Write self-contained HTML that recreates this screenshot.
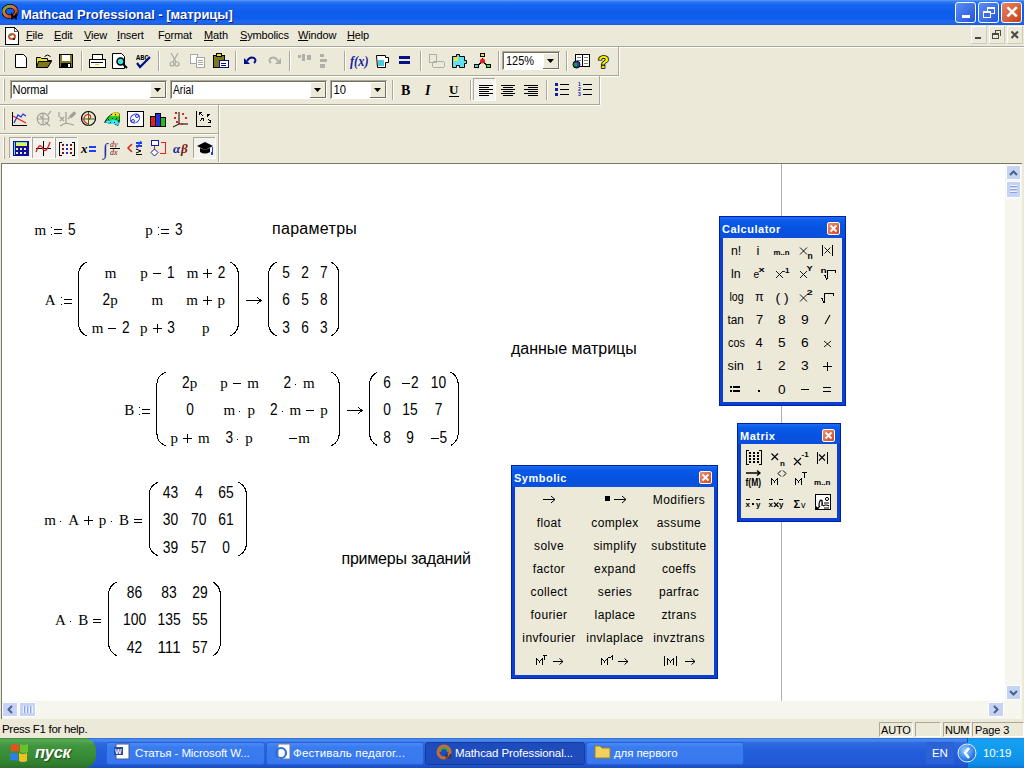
<!DOCTYPE html>
<html><head><meta charset="utf-8">
<style>
*{margin:0;padding:0;box-sizing:border-box}
html,body{width:1024px;height:768px;overflow:hidden;background:#ECE9D8;font-family:"Liberation Sans",sans-serif;position:relative}
.a{position:absolute}
#title{left:0;top:0;width:1024px;height:25px;background:linear-gradient(#5C9CFA 0px,#2C76F4 2px,#1666F0 5px,#0F5EEC 12px,#0E5CEB 18px,#1F6AF0 22px,#1A5AD8 25px)}
#title .t{left:21px;top:6.5px;color:#fff;font-weight:bold;font-size:13px;letter-spacing:-0.03px;text-shadow:1px 1px 0 #0A1E80}
.wb{top:2px;width:21px;height:21px;border:1px solid #fff;border-radius:3px;background:linear-gradient(135deg,#5B8DF8,#2456D6)}
.wbc{background:linear-gradient(135deg,#E88563,#C7401A)}
#menu{left:0;top:25px;width:1024px;height:21px;background:#ECE9D8}
#menu span{position:absolute;top:4px;font-size:11px;color:#000;letter-spacing:-0.15px}
.hl{left:0;width:1024px;height:1px;background:#A6A493}
.hw{left:0;width:1024px;height:1px;background:#FFFFFF}
#doc{left:2px;top:164px;width:1003px;height:537px;background:#fff}
.sep{width:1px;height:20px;background:#ACA899;border-right:1px solid #fff}
.grip{width:3px;height:22px;border-left:1px solid #fff;border-right:1px solid #ACA899}
.combo{background:#fff;border:1px solid #7F9DB9;height:19px;font-size:11px;padding:2px 0 0 3px}
.cbtn{position:absolute;right:1px;top:1px;width:15px;height:15px;background:#ECE9D8;border:1px solid #fff;border-right-color:#716F64;border-bottom-color:#716F64}
.cbtn:after{content:"";position:absolute;left:3px;top:5px;border-left:4px solid transparent;border-right:4px solid transparent;border-top:4px solid #000}
.serif{font-family:"Liberation Serif",serif}
.m{position:absolute;font-family:"Liberation Serif",serif;font-size:15px;color:#000;white-space:nowrap}
.s{position:absolute;font-family:"Liberation Sans",sans-serif;font-size:15px;color:#000;white-space:nowrap}
</style></head><body>
<!-- title bar -->
<div id="title" class="a">
 <svg class="a" style="left:2px;top:3px" width="18" height="18"><ellipse cx="8" cy="8.5" rx="6.3" ry="5.3" fill="none" stroke="#000" stroke-width="4.6"/><ellipse cx="8" cy="8.5" rx="6.3" ry="5.3" fill="none" stroke="url(#rg)" stroke-width="3"/><defs><linearGradient id="rg" x1="0" y1="0" x2="1" y2="1"><stop offset="0" stop-color="#60B040"/><stop offset="0.45" stop-color="#E07030"/><stop offset="0.75" stop-color="#D84020"/><stop offset="1" stop-color="#F0C030"/></linearGradient></defs><path d="M10 16.5v-5l2 3l2-3v5" stroke="#000" stroke-width="1.6" fill="none"/></svg>
 <div class="a t">Mathcad Professional - [матрицы]</div>
 <div class="a wb" style="left:955px"><div class="a" style="left:6px;top:12px;width:8px;height:3px;background:#fff"></div></div>
 <div class="a wb" style="left:978px"><div class="a" style="left:8px;top:4px;width:8px;height:7px;border:1px solid #fff;border-top-width:2px"></div><div class="a" style="left:4px;top:8px;width:8px;height:7px;border:1px solid #fff;border-top-width:2px;background:#3a6be8"></div></div>
 <div class="a wb wbc" style="left:1001px;color:#fff;font-size:17px;font-weight:bold;text-align:center;line-height:19px">✕</div>
</div>
<!-- menu -->
<div id="menu" class="a">
 <svg class="a" style="left:5px;top:2px" width="15" height="18" shape-rendering="crispEdges"><path d="M0.5 0.5h9l4 4v12.5h-13z" fill="#fff" stroke="#000"/><path d="M9.5 0.5v4h4" fill="none" stroke="#555"/><ellipse cx="7" cy="9.5" rx="3" ry="2.6" fill="none" stroke="#D05030" stroke-width="2" shape-rendering="auto"/><rect x="4" y="7" width="3" height="2" fill="#50A040"/><rect x="8" y="11" width="2" height="2" fill="#333"/></svg>
 <span style="left:26px"><u>F</u>ile</span>
 <span style="left:54px"><u>E</u>dit</span>
 <span style="left:84px"><u>V</u>iew</span>
 <span style="left:117px"><u>I</u>nsert</span>
 <span style="left:158px">F<u>o</u>rmat</span>
 <span style="left:204px"><u>M</u>ath</span>
 <span style="left:240px"><u>S</u>ymbolics</span>
 <span style="left:298px"><u>W</u>indow</span>
 <span style="left:347px"><u>H</u>elp</span>
 <svg class="a" style="left:968px;top:0" width="56" height="21" shape-rendering="crispEdges">
  <g fill="#fff"><rect x="3" y="1" width="16" height="1"/><rect x="3" y="1" width="1" height="18"/><rect x="21" y="1" width="16" height="1"/><rect x="21" y="1" width="1" height="18"/><rect x="39" y="1" width="16" height="1"/><rect x="39" y="1" width="1" height="18"/></g>
  <g fill="#CFCBBB"><rect x="3" y="18" width="16" height="1"/><rect x="18" y="1" width="1" height="18"/><rect x="21" y="18" width="16" height="1"/><rect x="36" y="1" width="1" height="18"/><rect x="39" y="18" width="16" height="1"/><rect x="54" y="1" width="1" height="18"/></g>
  <g fill="#4A4A44"><rect x="7" y="12" width="6" height="2"/>
  <rect x="24" y="8" width="7" height="6" fill="none"/><rect x="24" y="8" width="6" height="2"/><rect x="24" y="8" width="1" height="6"/><rect x="30" y="8" width="1" height="6"/><rect x="24" y="13" width="7" height="1"/>
  <rect x="27" y="5" width="6" height="1"/><rect x="32" y="5" width="1" height="6"/><rect x="27" y="5" width="1" height="3"/></g>
  <path d="M43.5 6.5l6.5 6.5M50 6.5l-6.5 6.5" stroke="#4A4A44" stroke-width="2" shape-rendering="auto"/>
 </svg>
</div>

<svg class="a" style="left:0;top:0" width="1024" height="165" shape-rendering="crispEdges">
<!-- full-width separators -->
<rect x="0" y="46" width="1024" height="1" fill="#ACA899"/>
<rect x="0" y="47" width="1024" height="1" fill="#fff"/>
<!-- toolbar boxes: right/bottom gray -->
<rect x="618" y="47" width="1" height="28" fill="#ACA899"/><rect x="619" y="47" width="1" height="28" fill="#fff"/>
<rect x="0" y="75" width="619" height="1" fill="#ACA899"/><rect x="0" y="76" width="620" height="1" fill="#fff"/>
<rect x="599" y="76" width="1" height="28" fill="#ACA899"/><rect x="600" y="76" width="1" height="28" fill="#fff"/>
<rect x="0" y="104" width="600" height="1" fill="#ACA899"/><rect x="0" y="105" width="601" height="1" fill="#fff"/>
<rect x="218" y="105" width="1" height="28" fill="#ACA899"/><rect x="219" y="105" width="1" height="28" fill="#fff"/>
<rect x="0" y="133" width="219" height="1" fill="#ACA899"/><rect x="0" y="134" width="220" height="1" fill="#fff"/>
<rect x="218" y="134" width="1" height="28" fill="#ACA899"/><rect x="219" y="134" width="1" height="28" fill="#fff"/>
<!-- grips -->
<g fill="#ACA899"><rect x="4" y="50" width="1" height="22"/><rect x="4" y="79" width="1" height="22"/><rect x="4" y="108" width="1" height="22"/><rect x="4" y="137" width="1" height="22"/></g>
<g fill="#fff"><rect x="3" y="50" width="1" height="22"/><rect x="3" y="79" width="1" height="22"/><rect x="3" y="108" width="1" height="22"/><rect x="3" y="137" width="1" height="22"/></g>
<!-- separators TB1 -->
<g fill="#ACA899"><rect x="81" y="51" width="1" height="20"/><rect x="158" y="51" width="1" height="20"/><rect x="235" y="51" width="1" height="20"/><rect x="289" y="51" width="1" height="20"/><rect x="344" y="51" width="1" height="20"/><rect x="420" y="51" width="1" height="20"/><rect x="498" y="51" width="1" height="20"/><rect x="566" y="51" width="1" height="20"/>
<rect x="392" y="80" width="1" height="20"/><rect x="470" y="80" width="1" height="20"/><rect x="546" y="80" width="1" height="20"/></g>
<g fill="#fff"><rect x="82" y="51" width="1" height="20"/><rect x="159" y="51" width="1" height="20"/><rect x="236" y="51" width="1" height="20"/><rect x="290" y="51" width="1" height="20"/><rect x="345" y="51" width="1" height="20"/><rect x="421" y="51" width="1" height="20"/><rect x="499" y="51" width="1" height="20"/><rect x="567" y="51" width="1" height="20"/>
<rect x="393" y="80" width="1" height="20"/><rect x="471" y="80" width="1" height="20"/><rect x="547" y="80" width="1" height="20"/></g>

<!-- New -->
<path d="M15 54h8l3 3v10h-11z" fill="#fff" stroke="#000" stroke-width="1" transform="translate(0.5 0.5)" shape-rendering="auto"/>
<!-- Open -->
<path d="M36 57h4l1 1h6v2h4l-4 7h-11z" fill="#E8E030" stroke="#000" transform="translate(0.5 0.5)" shape-rendering="auto"/>
<path d="M38 61h13l-4 6h-11z" fill="#807818" stroke="#000" transform="translate(0.5 0.5)" shape-rendering="auto"/>
<path d="M44 56q3-3 6 0" fill="none" stroke="#000" transform="translate(0.5 0.5)" shape-rendering="auto"/>
<!-- Save -->
<rect x="59" y="54" width="14" height="14" fill="#000"/><rect x="60" y="55" width="12" height="12" fill="#807818"/>
<rect x="62" y="55" width="8" height="6" fill="#fff"/><rect x="61" y="63" width="10" height="4" fill="#000"/><rect x="68" y="64" width="2" height="3" fill="#fff"/>
<!-- Print -->
<rect x="92" y="54" width="10" height="5" fill="#fff" stroke="#000" transform="translate(0.5 0.5)"/>
<rect x="89" y="59" width="16" height="8" rx="1" fill="#fff" stroke="#000" transform="translate(0.5 0.5)"/>
<rect x="91" y="62" width="12" height="1" fill="#000"/><rect x="95" y="64" width="4" height="1" fill="#E0D000"/>
<!-- Preview -->
<path d="M112 53h9l3 3v12h-12z" fill="#fff" stroke="#000" transform="translate(0.5 0.5)" shape-rendering="auto"/>
<circle cx="120.5" cy="61.5" r="3.5" fill="#40E0E0" stroke="#000" stroke-width="1.5" shape-rendering="auto"/>
<path d="M123 64l4 4" stroke="#000" stroke-width="2" shape-rendering="auto"/>
<!-- Spell -->
<text x="136" y="60" font-family="Liberation Mono" font-weight="bold" font-size="7" fill="#000">ABC</text>
<path d="M137 63l3 4l10-10" fill="none" stroke="#00108A" stroke-width="2.2" shape-rendering="auto"/>
<!-- Cut gray -->
<g fill="none" stroke="#A8A8A0" stroke-width="1.2" shape-rendering="auto"><path d="M171 53l5 9M178 53l-5 9"/><circle cx="172" cy="64" r="2"/><circle cx="177" cy="64" r="2"/></g>
<!-- Copy gray -->
<g fill="#fff" stroke="#A8A8A0" transform="translate(0.5 0.5)"><rect x="190" y="54" width="7" height="9"/><rect x="196" y="57" width="8" height="10"/></g>
<g fill="#A8A8A0"><rect x="198" y="60" width="5" height="1"/><rect x="198" y="62" width="5" height="1"/><rect x="198" y="64" width="5" height="1"/></g>
<!-- Paste -->
<rect x="213" y="55" width="11" height="12" fill="#807818" stroke="#000" transform="translate(0.5 0.5)"/>
<rect x="216" y="53" width="5" height="3" fill="#E8E030" stroke="#000" transform="translate(0.5 0.5)"/>
<rect x="219" y="60" width="9" height="7" fill="#fff" stroke="#00108A" stroke-width="1" transform="translate(0.5 0.5)"/>
<rect x="221" y="63" width="5" height="1" fill="#00108A"/><rect x="221" y="65" width="5" height="1" fill="#00108A"/>
<!-- Undo -->
<path d="M247 61q3-5 7-3q3 2 0 5" fill="none" stroke="#00108A" stroke-width="2" shape-rendering="auto"/>
<path d="M244 58v6h6z" fill="#00108A" shape-rendering="auto"/>
<!-- Redo gray -->
<path d="M278 61q-3-5-7-3q-3 2 0 5" fill="none" stroke="#B0B0A8" stroke-width="2" shape-rendering="auto"/>
<path d="M281 58v6h-6z" fill="#B0B0A8" shape-rendering="auto"/>
<!-- align gray icons -->
<g fill="#B0B0A8"><rect x="298" y="55" width="3" height="3"/><rect x="302" y="54" width="3" height="7"/><rect x="307" y="55" width="4" height="5"/>
<rect x="320" y="54" width="4" height="3"/><rect x="320" y="59" width="7" height="3"/><rect x="320" y="64" width="5" height="4"/></g>
<!-- f(x) -->
<text x="350" y="66" font-family="Liberation Serif" font-style="italic" font-weight="bold" font-size="14" fill="#1020A0" textLength="18.5" lengthAdjust="spacingAndGlyphs">f(x)</text>
<!-- unit cup -->
<path d="M376 55h9v2h3v5h-3v5h-8z" fill="#fff" stroke="#000" transform="translate(0.5 0.5)" shape-rendering="auto"/>
<rect x="378" y="60" width="6" height="6" fill="#50C8E0"/>
<!-- equals -->
<rect x="399" y="56" width="11" height="3" fill="#00108A"/><rect x="399" y="61" width="11" height="3" fill="#00108A"/>
<!-- gray icon -->
<g fill="none" stroke="#B0B0A8" transform="translate(0.5 0.5)"><rect x="429" y="54" width="7" height="8"/><rect x="432" y="61" width="12" height="6" rx="2"/></g>
<!-- puzzle -->
<path d="M452 56h4v-2h3v2h5v4h2v3h-2v4h-5v-2h-3v2h-4z" fill="#60E0F0" stroke="#000" transform="translate(0.5 0.5)" shape-rendering="auto"/>
<rect x="454" y="57" width="4" height="4" fill="#F0E040"/>
<!-- tree -->
<g stroke="#000" transform="translate(0.5 0.5)"><path d="M482 57v4M482 61l-5 4M482 61l5 4" fill="none"/><rect x="480" y="53" width="4" height="3" fill="#F0E040"/><rect x="474" y="64" width="4" height="3" fill="#40E0E0"/><rect x="486" y="64" width="4" height="3" fill="#40E040"/></g>
<circle cx="482.5" cy="61" r="2.5" fill="#E02020" shape-rendering="auto"/>
<!-- zoom combo -->
<rect x="502" y="51" width="58" height="19" fill="#fff"/>
<rect x="502" y="51" width="58" height="1" fill="#ACA899"/><rect x="502" y="51" width="1" height="19" fill="#ACA899"/>
<rect x="503" y="52" width="56" height="1" fill="#716F64"/><rect x="503" y="52" width="1" height="17" fill="#716F64"/>
<rect x="543" y="53" width="16" height="16" fill="#ECE9D8"/>
<rect x="543" y="53" width="15" height="1" fill="#fff"/><rect x="543" y="53" width="1" height="15" fill="#fff"/>
<rect x="558" y="53" width="1" height="16" fill="#716F64"/><rect x="543" y="68" width="16" height="1" fill="#716F64"/>
<path d="M547 59h7l-3.5 4z" fill="#000" shape-rendering="auto"/>
<text x="506" y="65" font-size="12" fill="#000" font-family="Liberation Sans" textLength="28" lengthAdjust="spacingAndGlyphs">125%</text>
<!-- book -->
<rect x="575" y="54" width="14" height="12" fill="#fff" stroke="#000" transform="translate(0.5 0.5)"/>
<rect x="582" y="54" width="1" height="12" fill="#000"/>
<g fill="#808080"><rect x="577" y="57" width="4" height="1"/><rect x="584" y="57" width="4" height="1"/><rect x="577" y="60" width="4" height="1"/><rect x="584" y="60" width="4" height="1"/><rect x="584" y="63" width="4" height="1"/></g>
<circle cx="576.5" cy="64.5" r="3.5" fill="#2040C0" stroke="#000" shape-rendering="auto"/><rect x="574" y="63" width="3" height="3" fill="#20A020"/>
<!-- ? -->
<text x="598" y="68" font-family="Liberation Sans" font-weight="bold" font-size="17" fill="#F8F000" stroke="#000" stroke-width="1.6" paint-order="stroke" textLength="11" lengthAdjust="spacingAndGlyphs">?</text>

<!-- TB2 combos -->
<g>
<rect x="10" y="80" width="157" height="19" fill="#fff"/>
<rect x="10" y="80" width="157" height="1" fill="#ACA899"/><rect x="10" y="80" width="1" height="19" fill="#ACA899"/>
<rect x="11" y="81" width="155" height="1" fill="#716F64"/><rect x="11" y="81" width="1" height="17" fill="#716F64"/>
<rect x="150" y="82" width="16" height="16" fill="#ECE9D8"/><rect x="150" y="82" width="15" height="1" fill="#fff"/><rect x="150" y="82" width="1" height="15" fill="#fff"/><rect x="165" y="82" width="1" height="16" fill="#716F64"/><rect x="150" y="97" width="16" height="1" fill="#716F64"/>
<path d="M154 88h7l-3.5 4z" fill="#000" shape-rendering="auto"/>
</g>
<g>
<rect x="170" y="80" width="157" height="19" fill="#fff"/>
<rect x="170" y="80" width="157" height="1" fill="#ACA899"/><rect x="170" y="80" width="1" height="19" fill="#ACA899"/>
<rect x="171" y="81" width="155" height="1" fill="#716F64"/><rect x="171" y="81" width="1" height="17" fill="#716F64"/>
<rect x="310" y="82" width="16" height="16" fill="#ECE9D8"/><rect x="310" y="82" width="15" height="1" fill="#fff"/><rect x="310" y="82" width="1" height="15" fill="#fff"/><rect x="325" y="82" width="1" height="16" fill="#716F64"/><rect x="310" y="97" width="16" height="1" fill="#716F64"/>
<path d="M314 88h7l-3.5 4z" fill="#000" shape-rendering="auto"/>
</g>
<g>
<rect x="330" y="80" width="57" height="19" fill="#fff"/>
<rect x="330" y="80" width="57" height="1" fill="#ACA899"/><rect x="330" y="80" width="1" height="19" fill="#ACA899"/>
<rect x="331" y="81" width="55" height="1" fill="#716F64"/><rect x="331" y="81" width="1" height="17" fill="#716F64"/>
<rect x="370" y="82" width="16" height="16" fill="#ECE9D8"/><rect x="370" y="82" width="15" height="1" fill="#fff"/><rect x="370" y="82" width="1" height="15" fill="#fff"/><rect x="385" y="82" width="1" height="16" fill="#716F64"/><rect x="370" y="97" width="16" height="1" fill="#716F64"/>
<path d="M374 88h7l-3.5 4z" fill="#000" shape-rendering="auto"/>
</g>
<text x="12.5" y="94" font-size="12" fill="#000" font-family="Liberation Sans" textLength="35.5" lengthAdjust="spacingAndGlyphs">Normal</text>
<text x="173" y="94" font-size="12" fill="#000" font-family="Liberation Sans" textLength="20.5" lengthAdjust="spacingAndGlyphs">Arial</text>
<text x="333.5" y="94" font-size="12" fill="#000" font-family="Liberation Sans" textLength="12.5" lengthAdjust="spacingAndGlyphs">10</text>
<!-- B I U -->
<text x="401" y="95" font-size="14" font-weight="bold" fill="#000" font-family="Liberation Serif">B</text>
<text x="425" y="95" font-size="14" font-weight="bold" font-style="italic" fill="#000" font-family="Liberation Serif">I</text>
<text x="449" y="94" font-size="13" font-weight="bold" fill="#000" font-family="Liberation Serif">U</text>
<rect x="449" y="96" width="10" height="1" fill="#000"/>
<!-- align left pressed -->
<rect x="473" y="78" width="23" height="23" fill="#F4F3EE"/>
<rect x="473" y="78" width="23" height="1" fill="#ACA899"/><rect x="473" y="78" width="1" height="23" fill="#ACA899"/>
<rect x="473" y="100" width="23" height="1" fill="#fff"/><rect x="495" y="78" width="1" height="23" fill="#fff"/>
<g fill="#000">
<rect x="479" y="85" width="14" height="1"/><rect x="501" y="85" width="14" height="1"/><rect x="524" y="85" width="14" height="1"/><rect x="479" y="87" width="10" height="1"/><rect x="503" y="87" width="10" height="1"/><rect x="528" y="87" width="10" height="1"/><rect x="479" y="89" width="14" height="1"/><rect x="501" y="89" width="14" height="1"/><rect x="524" y="89" width="14" height="1"/><rect x="479" y="91" width="10" height="1"/><rect x="503" y="91" width="10" height="1"/><rect x="528" y="91" width="10" height="1"/><rect x="479" y="93" width="14" height="1"/><rect x="501" y="93" width="14" height="1"/><rect x="524" y="93" width="14" height="1"/><rect x="479" y="95" width="10" height="1"/><rect x="503" y="95" width="10" height="1"/><rect x="528" y="95" width="10" height="1"/>
<rect x="560" y="84" width="9" height="1"/><rect x="560" y="89" width="9" height="1"/><rect x="560" y="94" width="9" height="1"/>
<rect x="583" y="84" width="9" height="1"/><rect x="583" y="89" width="9" height="1"/><rect x="583" y="94" width="9" height="1"/>
</g>
<g fill="#1020A0"><rect x="555" y="83" width="3" height="3"/><rect x="555" y="88" width="3" height="3"/><rect x="555" y="93" width="3" height="3"/></g>
<g font-family="Liberation Sans" font-size="5" fill="#1020A0" font-weight="bold"><text x="578" y="86">1</text><text x="578" y="91">2</text><text x="578" y="96">3</text></g>
</svg>
<svg class="a" style="left:0;top:0" width="230" height="165" shape-rendering="crispEdges">
<!-- TB3 -->
<!-- xy graph -->
<rect x="12" y="112" width="1" height="14" fill="#000"/><rect x="12" y="125" width="15" height="1" fill="#000"/>
<path d="M13 116l13 7" stroke="#E02020" stroke-width="1.2" fill="none" shape-rendering="auto"/>
<path d="M14 123l4-8l3 2l2-3l3 2" stroke="#2030E0" stroke-width="1.2" fill="none" shape-rendering="auto"/>
<!-- polar gray -->
<g fill="none" stroke="#A0A098" stroke-width="1.2" shape-rendering="auto"><circle cx="43" cy="119" r="5.8"/><path d="M37 119h12M43 113v12M45 122l5 4M51 111l-3 4M40 116l2 2"/></g>
<!-- 3d gray -->
<g fill="none" stroke="#A0A098" stroke-width="1.2" shape-rendering="auto"><path d="M66 112v11l-6 3M66 123l8 2M60 117l4 4M64 117l-4 4M59 112v5M68 119l3-3"/><path d="M70 116l4-4l1.5 1.5l-4 4z" fill="#A0A098"/></g>
<!-- polar -->
<circle cx="88.5" cy="118.5" r="7" fill="none" stroke="#000" stroke-width="1.2" shape-rendering="auto"/>
<path d="M82 119h13M88.5 112v14" stroke="#108010" stroke-width="1" shape-rendering="auto"/>
<path d="M88 124q-5 -2 -4 -6q2 -5 6 -3q2 3 -2 5" stroke="#E02020" stroke-width="1.2" fill="none" shape-rendering="auto"/>
<!-- surface -->
<g shape-rendering="auto">
<path d="M104 122.5q4-7 9-9.5l4-1l3 2v6l-1 4l-1 2l-4-2l-3 0l-4-1z" fill="#000"/>
<path d="M110 115.5l3-2.5l4-1l2.5 2l0 3l-4-1l-3 1z" fill="#F0E020"/>
<path d="M106 120.5l4-5l2.5 1l3-1l4 1l0 4l-4-1l-4 1l-3 0z" fill="#20D020"/>
<path d="M105 122.5l1.5-2l3.5 0l4-1l4 1l1 3.5l-1 1.5l-3-1.5l-4 0l-3-1z" fill="#30E8F0"/>
</g>
<g fill="#000" shape-rendering="crispEdges"><rect x="108" y="119" width="1" height="1"/><rect x="112" y="118" width="1" height="1"/><rect x="116" y="118" width="1" height="1"/><rect x="111" y="114" width="1" height="1"/><rect x="115" y="114" width="1" height="1"/><rect x="110" y="122" width="1" height="1"/><rect x="114" y="122" width="1" height="1"/></g>
<!-- contour -->
<rect x="127" y="111" width="16" height="15" fill="#fff" stroke="#000" transform="translate(0.5 0.5)"/>
<g fill="none" stroke="#2030E0" shape-rendering="auto"><ellipse cx="135" cy="118.5" rx="5" ry="4" transform="rotate(-40 135 118.5)"/><circle cx="133" cy="121" r="1.5"/><circle cx="137" cy="116" r="1.5"/></g>
<!-- bar chart -->
<rect x="150" y="116" width="5" height="10" fill="#E02020" stroke="#000" transform="translate(0.5 0.5)"/>
<rect x="155" y="113" width="5" height="13" fill="#2030E0" stroke="#000" transform="translate(0.5 0.5)"/>
<rect x="160" y="117" width="5" height="9" fill="#20C020" stroke="#000" transform="translate(0.5 0.5)"/>
<!-- scatter -->
<path d="M179 112v12l-6 3M179 124h9" stroke="#000" fill="none" shape-rendering="auto"/>
<g fill="#E02020"><rect x="175" y="112" width="2" height="2"/><rect x="182" y="113" width="2" height="2"/><rect x="174" y="117" width="2" height="2"/><rect x="185" y="117" width="2" height="2"/><rect x="176" y="121" width="2" height="2"/><rect x="181" y="123" width="2" height="2"/></g>
<!-- vector field -->
<path d="M196 111v15h15" stroke="#000" fill="none"/>
<g stroke="#000" stroke-width="1" fill="none" shape-rendering="auto"><path d="M200 113l3 3M210 114l-2 2M200 121l3-3M208 119l2 2"/></g><g fill="#000"><rect x="199" y="112" width="3" height="1"/><rect x="199" y="112" width="1" height="3"/><rect x="207" y="114" width="3" height="1"/><rect x="207" y="114" width="1" height="3"/><rect x="201" y="118" width="3" height="1"/><rect x="203" y="118" width="1" height="3"/><rect x="208" y="122" width="3" height="1"/><rect x="210" y="120" width="1" height="3"/></g>

<!-- TB4 pressed buttons -->
<g>
<rect x="9" y="137" width="23" height="22" fill="#F4F3EE"/><rect x="9" y="137" width="23" height="1" fill="#ACA899"/><rect x="9" y="137" width="1" height="22" fill="#ACA899"/><rect x="9" y="158" width="23" height="1" fill="#fff"/><rect x="31" y="137" width="1" height="22" fill="#fff"/>
<rect x="32" y="137" width="23" height="22" fill="#F4F3EE"/><rect x="32" y="137" width="23" height="1" fill="#ACA899"/><rect x="32" y="137" width="1" height="22" fill="#ACA899"/><rect x="32" y="158" width="23" height="1" fill="#fff"/><rect x="54" y="137" width="1" height="22" fill="#fff"/>
<rect x="55" y="137" width="23" height="22" fill="#F4F3EE"/><rect x="55" y="137" width="23" height="1" fill="#ACA899"/><rect x="55" y="137" width="1" height="22" fill="#ACA899"/><rect x="55" y="158" width="23" height="1" fill="#fff"/><rect x="77" y="137" width="1" height="22" fill="#fff"/>
<rect x="193" y="137" width="23" height="22" fill="#F4F3EE"/><rect x="193" y="137" width="23" height="1" fill="#ACA899"/><rect x="193" y="137" width="1" height="22" fill="#ACA899"/><rect x="193" y="158" width="23" height="1" fill="#fff"/><rect x="215" y="137" width="1" height="22" fill="#fff"/>
</g>
<!-- calculator -->
<rect x="13" y="141" width="16" height="15" fill="#1010A0"/><rect x="14" y="142" width="1" height="13" fill="#60E0F0"/>
<rect x="16" y="143" width="11" height="3" fill="#F0F040"/><rect x="16" y="142" width="11" height="1" fill="#60E0F0"/>
<g fill="#F0F0A0"><rect x="16" y="148" width="2" height="2"/><rect x="20" y="148" width="2" height="2"/><rect x="24" y="148" width="2" height="2"/><rect x="16" y="152" width="2" height="2"/><rect x="20" y="152" width="2" height="2"/><rect x="24" y="152" width="2" height="2"/></g>
<!-- graph -->
<rect x="43" y="141" width="1" height="15" fill="#000"/><rect x="36" y="148" width="15" height="1" fill="#000"/>
<path d="M36 152q3-9 6-5q2 6 5 2q2-3 3-7" stroke="#E02020" stroke-width="1.3" fill="none" shape-rendering="auto"/>
<!-- matrix -->
<g fill="#000"><rect x="59" y="142" width="1" height="14"/><rect x="59" y="142" width="3" height="1"/><rect x="59" y="155" width="3" height="1"/><rect x="74" y="142" width="1" height="14"/><rect x="72" y="142" width="3" height="1"/><rect x="72" y="155" width="3" height="1"/></g>
<g fill="#801010"><rect x="62" y="144" width="2" height="2"/><rect x="70" y="144" width="2" height="2"/><rect x="62" y="148" width="2" height="2"/><rect x="70" y="148" width="2" height="2"/><rect x="62" y="152" width="2" height="2"/><rect x="70" y="152" width="2" height="2"/></g>
<g fill="#2030C0"><rect x="66" y="144" width="2" height="2"/><rect x="66" y="148" width="2" height="2"/><rect x="66" y="152" width="2" height="2"/></g>
<!-- x= -->
<text x="81" y="153" font-family="Liberation Serif" font-style="italic" font-weight="bold" font-size="13" fill="#000">x</text>
<rect x="89" y="146" width="7" height="2" fill="#2040F0"/><rect x="89" y="150" width="7" height="2" fill="#2040F0"/>
<!-- integral -->
<text x="103" y="155" font-family="Liberation Serif" font-size="17" fill="#1020A0">∫</text>
<g font-family="Liberation Serif" font-style="italic" font-size="8" fill="#801010"><text x="110" y="147">dy</text><text x="110" y="155">dx</text></g>
<rect x="110" y="148" width="10" height="1" fill="#000"/>
<!-- <≠ -->
<path d="M132 144l-4 4l4 4" stroke="#E02020" stroke-width="1.5" fill="none" shape-rendering="auto"/>
<rect x="136" y="142" width="6" height="2" fill="#2040F0"/><rect x="136" y="145" width="6" height="2" fill="#2040F0"/><path d="M141 141l-4 7" stroke="#2040F0" stroke-width="1.2" shape-rendering="auto"/>
<path d="M136 149l5 2l-5 2" stroke="#000" fill="none" shape-rendering="auto"/><rect x="136" y="154" width="6" height="1" fill="#000"/>
<!-- program -->
<rect x="151" y="140" width="7" height="5" fill="#fff" stroke="#1020A0" transform="translate(0.5 0.5)"/>
<path d="M154.5 146v3" stroke="#E02020"/>
<path d="M154.5 149l3.5 3.5l-3.5 3.5l-3.5-3.5z" fill="#fff" stroke="#1020A0" shape-rendering="auto"/>
<path d="M160 142h5v11h-6" stroke="#E02020" fill="none" transform="translate(0.5 0.5)"/>
<!-- alpha beta -->
<text x="173" y="153" font-family="Liberation Serif" font-style="italic" font-weight="bold" font-size="13" fill="#1020A0">α</text>
<text x="181" y="153" font-family="Liberation Serif" font-style="italic" font-weight="bold" font-size="13" fill="#801010">β</text>
<!-- grad cap -->
<path d="M197 146l8-4l8 4l-8 4z" fill="#000" shape-rendering="auto"/>
<path d="M200 148v4q5 3 10 0v-4l-5 2z" fill="#000" shape-rendering="auto"/>
<rect x="212" y="147" width="1" height="8" fill="#2040F0"/><rect x="211" y="152" width="2" height="3" fill="#2040F0"/>
</svg>

<!-- document -->
<div id="doc" class="a"></div>
<div class="a" style="left:1px;top:163px;width:1021px;height:1px;background:#7A7868"></div>
<div class="a" style="left:781px;top:164px;width:1px;height:537px;background:#B0B0B0"></div>
<svg class="a" style="left:0;top:0" width="1024" height="768" font-size="15" fill="#000" shape-rendering="crispEdges">
<text x="34.59" y="235.0" font-family="Liberation Serif">m</text>
<rect x="51" y="227" width="1" height="1"/><rect x="51" y="234" width="1" height="1"/>
<rect x="54" y="229" width="8" height="1"/><rect x="54" y="233" width="8" height="1"/>
<text x="68.10" y="235.0" font-family="Liberation Sans" font-size="16" textLength="7.60" lengthAdjust="spacingAndGlyphs">5</text>
<text x="145.16" y="235.0" font-family="Liberation Serif">p</text>
<rect x="158" y="227" width="1" height="1"/><rect x="158" y="234" width="1" height="1"/>
<rect x="161" y="229" width="8" height="1"/><rect x="161" y="233" width="8" height="1"/>
<text x="175.00" y="235.0" font-family="Liberation Sans" font-size="16" textLength="7.60" lengthAdjust="spacingAndGlyphs">3</text>
<text x="272.0" y="233.6" font-family="Liberation Sans" font-size="16" letter-spacing="0.3">параметры</text>
<text x="44.85" y="305.0" font-family="Liberation Serif">A</text>
<rect x="61" y="297" width="1" height="1"/><rect x="61" y="304" width="1" height="1"/>
<rect x="64" y="299" width="8" height="1"/><rect x="64" y="303" width="8" height="1"/>
<g fill="none" stroke="#000" stroke-width="1.1">
<path d="M86.7 262.0 C81.1 265.0 78.6 270.0 78.6 274.0 L78.6 324.0 C78.6 328.0 81.1 333.0 86.7 336.0" />
<path d="M230.3 262.0 C235.9 265.0 238.4 270.0 238.4 274.0 L238.4 324.0 C238.4 328.0 235.9 333.0 230.3 336.0" />
</g>
<text x="104.64" y="278.0" font-family="Liberation Serif">m</text>
<text x="140.31" y="278.0" font-family="Liberation Serif">p</text>
<rect x="153" y="273" width="8" height="1"/>
<text x="167.05" y="278.0" font-family="Liberation Sans" font-size="16" textLength="7.60" lengthAdjust="spacingAndGlyphs">1</text>
<text x="186.84" y="278.0" font-family="Liberation Serif">m</text>
<rect x="203" y="273" width="9" height="1"/><rect x="207" y="269" width="1" height="9"/>
<text x="217.85" y="278.0" font-family="Liberation Sans" font-size="16" textLength="7.60" lengthAdjust="spacingAndGlyphs">2</text>
<text x="102.60" y="305.0" font-family="Liberation Sans" font-size="16" textLength="7.60" lengthAdjust="spacingAndGlyphs">2</text>
<text x="110.16" y="305.0" font-family="Liberation Serif">p</text>
<text x="151.44" y="305.0" font-family="Liberation Serif">m</text>
<text x="186.34" y="305.0" font-family="Liberation Serif">m</text>
<rect x="203" y="300" width="9" height="1"/><rect x="207" y="296" width="1" height="9"/>
<text x="217.61" y="305.0" font-family="Liberation Serif">p</text>
<text x="91.64" y="333.0" font-family="Liberation Serif">m</text>
<rect x="108" y="328" width="8" height="1"/>
<text x="122.05" y="333.0" font-family="Liberation Sans" font-size="16" textLength="7.60" lengthAdjust="spacingAndGlyphs">2</text>
<text x="140.01" y="333.0" font-family="Liberation Serif">p</text>
<rect x="153" y="328" width="9" height="1"/><rect x="157" y="324" width="1" height="9"/>
<text x="167.35" y="333.0" font-family="Liberation Sans" font-size="16" textLength="7.60" lengthAdjust="spacingAndGlyphs">3</text>
<text x="202.01" y="333.0" font-family="Liberation Serif">p</text>
<g fill="none" stroke="#000" stroke-width="1"><path d="M246.0 300.5 h15 M257.0 297.0 l4 3.5 l-4 3.5"/></g>
<g fill="none" stroke="#000" stroke-width="1.1">
<path d="M276.7 262.0 C271.1 265.0 268.6 270.0 268.6 274.0 L268.6 324.0 C268.6 328.0 271.1 333.0 276.7 336.0" />
<path d="M331.3 262.0 C336.4 265.0 338.9 270.0 338.9 274.0 L338.9 324.0 C338.9 328.0 336.4 333.0 331.3 336.0" />
</g>
<text x="282.25" y="278.0" font-family="Liberation Sans" font-size="16" textLength="7.60" lengthAdjust="spacingAndGlyphs">5</text>
<text x="301.25" y="278.0" font-family="Liberation Sans" font-size="16" textLength="7.60" lengthAdjust="spacingAndGlyphs">2</text>
<text x="319.95" y="278.0" font-family="Liberation Sans" font-size="16" textLength="7.60" lengthAdjust="spacingAndGlyphs">7</text>
<text x="282.25" y="305.0" font-family="Liberation Sans" font-size="16" textLength="7.60" lengthAdjust="spacingAndGlyphs">6</text>
<text x="301.25" y="305.0" font-family="Liberation Sans" font-size="16" textLength="7.60" lengthAdjust="spacingAndGlyphs">5</text>
<text x="319.95" y="305.0" font-family="Liberation Sans" font-size="16" textLength="7.60" lengthAdjust="spacingAndGlyphs">8</text>
<text x="282.25" y="333.0" font-family="Liberation Sans" font-size="16" textLength="7.60" lengthAdjust="spacingAndGlyphs">3</text>
<text x="301.25" y="333.0" font-family="Liberation Sans" font-size="16" textLength="7.60" lengthAdjust="spacingAndGlyphs">6</text>
<text x="319.95" y="333.0" font-family="Liberation Sans" font-size="16" textLength="7.60" lengthAdjust="spacingAndGlyphs">3</text>
<text x="511.0" y="354.0" font-family="Liberation Sans" font-size="16" letter-spacing="-0.03">данные матрицы</text>
<text x="124.37" y="415.0" font-family="Liberation Serif">B</text>
<rect x="139" y="407" width="1" height="1"/><rect x="139" y="414" width="1" height="1"/>
<rect x="142" y="409" width="8" height="1"/><rect x="142" y="413" width="8" height="1"/>
<g fill="none" stroke="#000" stroke-width="1.1">
<path d="M165.7 372.0 C159.4 375.0 156.9 380.0 156.9 384.0 L156.9 434.0 C156.9 438.0 159.4 443.0 165.7 446.0" />
<path d="M331.3 372.0 C336.7 375.0 339.2 380.0 339.2 384.0 L339.2 434.0 C339.2 438.0 336.7 443.0 331.3 446.0" />
</g>
<text x="182.10" y="388.0" font-family="Liberation Sans" font-size="16" textLength="7.60" lengthAdjust="spacingAndGlyphs">2</text>
<text x="189.66" y="388.0" font-family="Liberation Serif">p</text>
<text x="220.21" y="388.0" font-family="Liberation Serif">p</text>
<rect x="233" y="383" width="8" height="1"/>
<text x="247.14" y="388.0" font-family="Liberation Serif">m</text>
<text x="283.60" y="388.0" font-family="Liberation Sans" font-size="16" textLength="7.60" lengthAdjust="spacingAndGlyphs">2</text>
<rect x="295" y="384" width="1" height="1"/>
<text x="303.09" y="388.0" font-family="Liberation Serif">m</text>
<text x="186.25" y="415.0" font-family="Liberation Sans" font-size="16" textLength="7.60" lengthAdjust="spacingAndGlyphs">0</text>
<text x="223.49" y="415.0" font-family="Liberation Serif">m</text>
<rect x="239" y="411" width="1" height="1"/>
<text x="247.46" y="415.0" font-family="Liberation Serif">p</text>
<text x="270.10" y="415.0" font-family="Liberation Sans" font-size="16" textLength="7.60" lengthAdjust="spacingAndGlyphs">2</text>
<rect x="282" y="411" width="1" height="1"/>
<text x="289.59" y="415.0" font-family="Liberation Serif">m</text>
<rect x="306" y="410" width="8" height="1"/>
<text x="320.26" y="415.0" font-family="Liberation Serif">p</text>
<text x="170.41" y="443.0" font-family="Liberation Serif">p</text>
<rect x="183" y="438" width="9" height="1"/><rect x="187" y="434" width="1" height="9"/>
<text x="197.94" y="443.0" font-family="Liberation Serif">m</text>
<text x="225.60" y="443.0" font-family="Liberation Sans" font-size="16" textLength="7.60" lengthAdjust="spacingAndGlyphs">3</text>
<rect x="237" y="439" width="1" height="1"/>
<text x="245.16" y="443.0" font-family="Liberation Serif">p</text>
<rect x="289" y="438" width="8" height="1"/>
<text x="298.14" y="443.0" font-family="Liberation Serif">m</text>
<g fill="none" stroke="#000" stroke-width="1"><path d="M347.0 410.5 h15 M358.0 407.0 l4 3.5 l-4 3.5"/></g>
<g fill="none" stroke="#000" stroke-width="1.1">
<path d="M377.2 372.0 C372.1 375.0 369.6 380.0 369.6 384.0 L369.6 433.6 C369.6 437.6 372.1 442.6 377.2 445.6" />
<path d="M450.6 372.0 C455.7 375.0 458.2 380.0 458.2 384.0 L458.2 433.6 C458.2 437.6 455.7 442.6 450.6 445.6" />
</g>
<text x="383.25" y="388.0" font-family="Liberation Sans" font-size="16" textLength="7.60" lengthAdjust="spacingAndGlyphs">6</text>
<rect x="402" y="383" width="8" height="1"/>
<text x="410.95" y="388.0" font-family="Liberation Sans" font-size="16" textLength="7.60" lengthAdjust="spacingAndGlyphs">2</text>
<text x="430.85" y="388.0" font-family="Liberation Sans" font-size="16" textLength="15.40" lengthAdjust="spacingAndGlyphs">10</text>
<text x="383.25" y="415.0" font-family="Liberation Sans" font-size="16" textLength="7.60" lengthAdjust="spacingAndGlyphs">0</text>
<text x="402.35" y="415.0" font-family="Liberation Sans" font-size="16" textLength="15.40" lengthAdjust="spacingAndGlyphs">15</text>
<text x="434.75" y="415.0" font-family="Liberation Sans" font-size="16" textLength="7.60" lengthAdjust="spacingAndGlyphs">7</text>
<text x="383.25" y="443.0" font-family="Liberation Sans" font-size="16" textLength="7.60" lengthAdjust="spacingAndGlyphs">8</text>
<text x="406.25" y="443.0" font-family="Liberation Sans" font-size="16" textLength="7.60" lengthAdjust="spacingAndGlyphs">9</text>
<rect x="431" y="438" width="8" height="1"/>
<text x="439.45" y="443.0" font-family="Liberation Sans" font-size="16" textLength="7.60" lengthAdjust="spacingAndGlyphs">5</text>
<text x="44.19" y="525.0" font-family="Liberation Serif">m</text>
<rect x="60" y="521" width="1" height="1"/>
<text x="68.25" y="525.0" font-family="Liberation Serif">A</text>
<rect x="84" y="520" width="9" height="1"/><rect x="88" y="516" width="1" height="9"/>
<text x="98.86" y="525.0" font-family="Liberation Serif">p</text>
<rect x="111" y="521" width="1" height="1"/>
<text x="118.97" y="525.0" font-family="Liberation Serif">B</text>
<rect x="134" y="519" width="8" height="1"/><rect x="134" y="522" width="8" height="1"/>
<g fill="none" stroke="#000" stroke-width="1.1">
<path d="M158.2 482.0 C151.8 485.0 149.3 490.0 149.3 494.0 L149.3 544.0 C149.3 548.0 151.8 553.0 158.2 556.0" />
<path d="M238.3 482.0 C243.9 485.0 246.4 490.0 246.4 494.0 L246.4 544.0 C246.4 548.0 243.9 553.0 238.3 556.0" />
</g>
<text x="162.85" y="498.0" font-family="Liberation Sans" font-size="16" textLength="15.40" lengthAdjust="spacingAndGlyphs">43</text>
<text x="194.95" y="498.0" font-family="Liberation Sans" font-size="16" textLength="7.60" lengthAdjust="spacingAndGlyphs">4</text>
<text x="218.35" y="498.0" font-family="Liberation Sans" font-size="16" textLength="15.40" lengthAdjust="spacingAndGlyphs">65</text>
<text x="162.85" y="525.0" font-family="Liberation Sans" font-size="16" textLength="15.40" lengthAdjust="spacingAndGlyphs">30</text>
<text x="191.05" y="525.0" font-family="Liberation Sans" font-size="16" textLength="15.40" lengthAdjust="spacingAndGlyphs">70</text>
<text x="218.35" y="525.0" font-family="Liberation Sans" font-size="16" textLength="15.40" lengthAdjust="spacingAndGlyphs">61</text>
<text x="162.85" y="553.0" font-family="Liberation Sans" font-size="16" textLength="15.40" lengthAdjust="spacingAndGlyphs">39</text>
<text x="191.05" y="553.0" font-family="Liberation Sans" font-size="16" textLength="15.40" lengthAdjust="spacingAndGlyphs">57</text>
<text x="222.25" y="553.0" font-family="Liberation Sans" font-size="16" textLength="7.60" lengthAdjust="spacingAndGlyphs">0</text>
<text x="341.5" y="564.0" font-family="Liberation Sans" font-size="16" letter-spacing="-0.22">примеры заданий</text>
<text x="55.05" y="625.0" font-family="Liberation Serif">A</text>
<rect x="70" y="621" width="1" height="1"/>
<text x="78.17" y="625.0" font-family="Liberation Serif">B</text>
<rect x="93" y="619" width="8" height="1"/><rect x="93" y="622" width="8" height="1"/>
<g fill="none" stroke="#000" stroke-width="1.1">
<path d="M116.7 582.0 C111.1 585.0 108.6 590.0 108.6 594.0 L108.6 643.7 C108.6 647.7 111.1 652.7 116.7 655.7" />
<path d="M213.2 582.0 C217.8 585.0 220.3 590.0 220.3 594.0 L220.3 643.7 C220.3 647.7 217.8 652.7 213.2 655.7" />
</g>
<text x="126.85" y="598.0" font-family="Liberation Sans" font-size="16" textLength="15.40" lengthAdjust="spacingAndGlyphs">86</text>
<text x="161.35" y="598.0" font-family="Liberation Sans" font-size="16" textLength="15.40" lengthAdjust="spacingAndGlyphs">83</text>
<text x="192.35" y="598.0" font-family="Liberation Sans" font-size="16" textLength="15.40" lengthAdjust="spacingAndGlyphs">29</text>
<text x="122.95" y="625.0" font-family="Liberation Sans" font-size="16" textLength="23.20" lengthAdjust="spacingAndGlyphs">100</text>
<text x="157.45" y="625.0" font-family="Liberation Sans" font-size="16" textLength="23.20" lengthAdjust="spacingAndGlyphs">135</text>
<text x="192.35" y="625.0" font-family="Liberation Sans" font-size="16" textLength="15.40" lengthAdjust="spacingAndGlyphs">55</text>
<text x="126.85" y="653.0" font-family="Liberation Sans" font-size="16" textLength="15.40" lengthAdjust="spacingAndGlyphs">42</text>
<text x="157.45" y="653.0" font-family="Liberation Sans" font-size="16" textLength="23.20" lengthAdjust="spacingAndGlyphs">111</text>
<text x="192.35" y="653.0" font-family="Liberation Sans" font-size="16" textLength="15.40" lengthAdjust="spacingAndGlyphs">57</text>
</svg>
<div class="a" style="left:719px;top:216px;width:127px;height:190px;background:#0A3FD0;border:1px solid #0020A8"></div>
<div class="a" style="left:720px;top:217px;width:125px;height:21px;background:linear-gradient(#1E6CF2 0,#0A5AE8 4px,#0652E0 12px,#0B4FDC 100%)"></div>
<div class="a" style="left:723px;top:238px;width:119px;height:164px;background:#ECE9D8"></div>
<div class="a" style="left:722px;top:223px;color:#fff;font-weight:bold;font-size:11px;line-height:12px;letter-spacing:0.5px">Calculator</div>
<div class="a" style="left:827px;top:222px;width:13px;height:13px;border:1px solid #fff;border-radius:2px;background:linear-gradient(135deg,#F09070,#D04820)"></div>
<svg class="a" style="left:827px;top:222px" width="13" height="13"><path d="M3.5 3.5l6 6M9.5 3.5l-6 6" stroke="#fff" stroke-width="1.8"/></svg>
<div class="a" style="left:511px;top:465px;width:207px;height:214px;background:#0A3FD0;border:1px solid #0020A8"></div>
<div class="a" style="left:512px;top:466px;width:205px;height:21px;background:linear-gradient(#1E6CF2 0,#0A5AE8 4px,#0652E0 12px,#0B4FDC 100%)"></div>
<div class="a" style="left:515px;top:487px;width:199px;height:188px;background:#ECE9D8"></div>
<div class="a" style="left:514px;top:472px;color:#fff;font-weight:bold;font-size:11px;line-height:12px;letter-spacing:0.5px">Symbolic</div>
<div class="a" style="left:699px;top:471px;width:13px;height:13px;border:1px solid #fff;border-radius:2px;background:linear-gradient(135deg,#F09070,#D04820)"></div>
<svg class="a" style="left:699px;top:471px" width="13" height="13"><path d="M3.5 3.5l6 6M9.5 3.5l-6 6" stroke="#fff" stroke-width="1.8"/></svg>
<div class="a" style="left:737px;top:423px;width:104px;height:99px;background:#0A3FD0;border:1px solid #0020A8"></div>
<div class="a" style="left:738px;top:424px;width:102px;height:20px;background:linear-gradient(#1E6CF2 0,#0A5AE8 4px,#0652E0 12px,#0B4FDC 100%)"></div>
<div class="a" style="left:741px;top:444px;width:96px;height:74px;background:#ECE9D8"></div>
<div class="a" style="left:740px;top:430px;color:#fff;font-weight:bold;font-size:11px;line-height:12px;letter-spacing:0.5px">Matrix</div>
<div class="a" style="left:822px;top:429px;width:13px;height:13px;border:1px solid #fff;border-radius:2px;background:linear-gradient(135deg,#F09070,#D04820)"></div>
<svg class="a" style="left:822px;top:429px" width="13" height="13"><path d="M3.5 3.5l6 6M9.5 3.5l-6 6" stroke="#fff" stroke-width="1.8"/></svg>
<svg class="a" style="left:0;top:0" width="1024" height="768" font-family="Liberation Sans" fill="#000">
<text x="731.0" y="255.0" font-size="12" textLength="10.3" lengthAdjust="spacingAndGlyphs">n!</text>
<text x="756.4" y="255.0" font-size="13">i</text>
<text x="773.4" y="254.5" font-size="8" font-weight="bold" textLength="16.2" lengthAdjust="spacingAndGlyphs">m..n</text>
<path d="M800.0 247.5 l7 7 M807.0 247.5 l-7 7" stroke="#000" stroke-width="0.9" fill="none"/>
<text x="807.4" y="258.5" font-size="9" font-weight="bold" textLength="5.2" lengthAdjust="spacingAndGlyphs">n</text>
<rect x="822" y="245" width="1" height="11" shape-rendering="crispEdges"/><rect x="832" y="245" width="1" height="11" shape-rendering="crispEdges"/>
<path d="M824.5 247.5 l6 6 M830.5 247.5 l-6 6" stroke="#000" stroke-width="0.9" fill="none"/>
<text x="731.0" y="278.0" font-size="13" textLength="9.6" lengthAdjust="spacingAndGlyphs">ln</text>
<text x="753.4" y="278.0" font-size="11" textLength="5.7" lengthAdjust="spacingAndGlyphs">e</text>
<text x="758.4" y="271.5" font-size="7" font-weight="bold" textLength="6.2" lengthAdjust="spacingAndGlyphs">x</text>
<path d="M776.0 271.0 l7 7 M783.0 271.0 l-7 7" stroke="#000" stroke-width="0.9" fill="none"/>
<text x="782.4" y="272.5" font-size="8" font-weight="bold" textLength="7.2" lengthAdjust="spacingAndGlyphs">-1</text>
<path d="M800.0 271.0 l7 7 M807.0 271.0 l-7 7" stroke="#000" stroke-width="0.9" fill="none"/>
<text x="806.4" y="270.5" font-size="7" font-weight="bold" textLength="6.2" lengthAdjust="spacingAndGlyphs">Y</text>
<text x="820.4" y="272.5" font-size="8" font-weight="bold" textLength="6.2" lengthAdjust="spacingAndGlyphs">n</text>
<g shape-rendering="crispEdges"><rect x="827" y="270" width="1" height="9"/><rect x="827" y="270" width="9" height="1"/><rect x="835" y="270" width="1" height="3"/>
<rect x="824" y="275" width="2" height="1"/><rect x="825" y="276" width="1" height="2"/><rect x="826" y="278" width="1" height="2"/></g>
<text x="729.4" y="301.0" font-size="13" textLength="14.2" lengthAdjust="spacingAndGlyphs">log</text>
<text x="754.9" y="301.0" font-size="12" textLength="8.7" lengthAdjust="spacingAndGlyphs">π</text>
<text x="775.4" y="302.0" font-size="13" textLength="13.2" lengthAdjust="spacingAndGlyphs">(&#160;)</text>
<path d="M800.0 294.5 l7 7 M807.0 294.5 l-7 7" stroke="#000" stroke-width="0.9" fill="none"/>
<text x="806.4" y="294.5" font-size="8" font-weight="bold" textLength="6.2" lengthAdjust="spacingAndGlyphs">2</text>
<g shape-rendering="crispEdges"><rect x="824" y="293" width="1" height="10"/><rect x="824" y="293" width="10" height="1"/><rect x="833" y="293" width="1" height="3"/>
<rect x="821" y="298" width="2" height="1"/><rect x="822" y="299" width="1" height="2"/><rect x="823" y="301" width="1" height="2"/></g>
<text x="727.6" y="324.0" font-size="12" textLength="16.3" lengthAdjust="spacingAndGlyphs">tan</text>
<text x="756.1" y="324.0" font-size="12" textLength="7.2" lengthAdjust="spacingAndGlyphs">7</text>
<text x="778.0" y="324.0" font-size="12" textLength="7.6" lengthAdjust="spacingAndGlyphs">8</text>
<text x="800.9" y="324.0" font-size="12" textLength="7.7" lengthAdjust="spacingAndGlyphs">9</text>
<path d="M825 324l5-9" stroke="#000" stroke-width="1.1"/>
<text x="728.1" y="347.0" font-size="12" textLength="16.8" lengthAdjust="spacingAndGlyphs">cos</text>
<text x="755.4" y="347.0" font-size="12" textLength="7.2" lengthAdjust="spacingAndGlyphs">4</text>
<text x="778.0" y="347.0" font-size="12" textLength="7.6" lengthAdjust="spacingAndGlyphs">5</text>
<text x="800.9" y="347.0" font-size="12" textLength="7.7" lengthAdjust="spacingAndGlyphs">6</text>
<path d="M824.0 341.0 l7 6 M831.0 341.0 l-7 6" stroke="#000" stroke-width="0.9" fill="none"/>
<text x="727.6" y="370.0" font-size="12" textLength="16.3" lengthAdjust="spacingAndGlyphs">sin</text>
<text x="756.4" y="370.0" font-size="12" textLength="5.7" lengthAdjust="spacingAndGlyphs">1</text>
<text x="778.0" y="370.0" font-size="12" textLength="7.6" lengthAdjust="spacingAndGlyphs">2</text>
<text x="800.9" y="370.0" font-size="12" textLength="7.7" lengthAdjust="spacingAndGlyphs">3</text>
<g shape-rendering="crispEdges"><rect x="823" y="366" width="9" height="1"/><rect x="827" y="362" width="1" height="9"/></g>
<g shape-rendering="crispEdges"><rect x="730" y="386" width="2" height="2"/><rect x="730" y="390" width="2" height="2"/><rect x="733" y="386" width="7" height="2"/><rect x="733" y="390" width="7" height="2"/><rect x="758" y="390" width="2" height="2"/><rect x="801" y="389" width="8" height="1"/><rect x="823" y="387" width="8" height="1"/><rect x="823" y="391" width="8" height="1"/></g>
<text x="778.0" y="393.5" font-size="12" textLength="7.6" lengthAdjust="spacingAndGlyphs">0</text>
</svg>
<div class="a" style="left:629px;top:493px;width:100px;text-align:center;font-size:12px;line-height:14px;white-space:nowrap;letter-spacing:0.4px">Modifiers</div>
<div class="a" style="left:499px;top:516px;width:100px;text-align:center;font-size:12px;line-height:14px;white-space:nowrap;letter-spacing:0.4px">float</div>
<div class="a" style="left:565px;top:516px;width:100px;text-align:center;font-size:12px;line-height:14px;white-space:nowrap;letter-spacing:0.4px">complex</div>
<div class="a" style="left:629px;top:516px;width:100px;text-align:center;font-size:12px;line-height:14px;white-space:nowrap;letter-spacing:0.4px">assume</div>
<div class="a" style="left:499px;top:539px;width:100px;text-align:center;font-size:12px;line-height:14px;white-space:nowrap;letter-spacing:0.4px">solve</div>
<div class="a" style="left:565px;top:539px;width:100px;text-align:center;font-size:12px;line-height:14px;white-space:nowrap;letter-spacing:0.4px">simplify</div>
<div class="a" style="left:629px;top:539px;width:100px;text-align:center;font-size:12px;line-height:14px;white-space:nowrap;letter-spacing:0.4px">substitute</div>
<div class="a" style="left:499px;top:562px;width:100px;text-align:center;font-size:12px;line-height:14px;white-space:nowrap;letter-spacing:0.4px">factor</div>
<div class="a" style="left:565px;top:562px;width:100px;text-align:center;font-size:12px;line-height:14px;white-space:nowrap;letter-spacing:0.4px">expand</div>
<div class="a" style="left:629px;top:562px;width:100px;text-align:center;font-size:12px;line-height:14px;white-space:nowrap;letter-spacing:0.4px">coeffs</div>
<div class="a" style="left:499px;top:585px;width:100px;text-align:center;font-size:12px;line-height:14px;white-space:nowrap;letter-spacing:0.4px">collect</div>
<div class="a" style="left:565px;top:585px;width:100px;text-align:center;font-size:12px;line-height:14px;white-space:nowrap;letter-spacing:0.4px">series</div>
<div class="a" style="left:629px;top:585px;width:100px;text-align:center;font-size:12px;line-height:14px;white-space:nowrap;letter-spacing:0.4px">parfrac</div>
<div class="a" style="left:499px;top:608px;width:100px;text-align:center;font-size:12px;line-height:14px;white-space:nowrap;letter-spacing:0.4px">fourier</div>
<div class="a" style="left:565px;top:608px;width:100px;text-align:center;font-size:12px;line-height:14px;white-space:nowrap;letter-spacing:0.4px">laplace</div>
<div class="a" style="left:629px;top:608px;width:100px;text-align:center;font-size:12px;line-height:14px;white-space:nowrap;letter-spacing:0.4px">ztrans</div>
<div class="a" style="left:499px;top:631px;width:100px;text-align:center;font-size:12px;line-height:14px;white-space:nowrap;letter-spacing:0.4px">invfourier</div>
<div class="a" style="left:565px;top:631px;width:100px;text-align:center;font-size:12px;line-height:14px;white-space:nowrap;letter-spacing:0.4px">invlaplace</div>
<div class="a" style="left:629px;top:631px;width:100px;text-align:center;font-size:12px;line-height:14px;white-space:nowrap;letter-spacing:0.4px">invztrans</div>
<svg class="a" style="left:511px;top:490px" width="210" height="190" shape-rendering="crispEdges"><g fill="#000"><rect x="32" y="9" width="12" height="1"/><path d="M40 6l4 3.5l-4 3.5" stroke="#000" fill="none" shape-rendering="auto"/><rect x="94" y="6" width="5" height="5"/><rect x="103" y="9" width="12" height="1"/><path d="M111 6l4 3.5l-4 3.5" stroke="#000" fill="none" shape-rendering="auto"/><rect x="25" y="168" width="1" height="7"/><rect x="31" y="168" width="1" height="7"/><rect x="26" y="169" width="1" height="1"/><rect x="27" y="170" width="1" height="1"/><rect x="28" y="171" width="1" height="2"/><rect x="29" y="170" width="1" height="1"/><rect x="30" y="169" width="1" height="1"/><rect x="32" y="165" width="4" height="1"/><rect x="33" y="165" width="1" height="5"/><rect x="42" y="171" width="10" height="1"/><path d="M48.5 168.5l3.5 3l-3.5 3" stroke="#000" fill="none" shape-rendering="auto"/><rect x="90" y="168" width="1" height="7"/><rect x="96" y="168" width="1" height="7"/><rect x="91" y="169" width="1" height="1"/><rect x="92" y="170" width="1" height="1"/><rect x="93" y="171" width="1" height="2"/><rect x="94" y="170" width="1" height="1"/><rect x="95" y="169" width="1" height="1"/><rect x="97" y="167" width="3" height="1"/><rect x="101" y="165" width="1" height="5"/><rect x="100" y="166" width="1" height="1"/><rect x="107" y="171" width="10" height="1"/><path d="M113.5 168.5l3.5 3l-3.5 3" stroke="#000" fill="none" shape-rendering="auto"/><rect x="153" y="166" width="1" height="10"/><rect x="156" y="168" width="1" height="7"/><rect x="162" y="168" width="1" height="7"/><rect x="157" y="169" width="1" height="1"/><rect x="158" y="170" width="1" height="1"/><rect x="159" y="171" width="1" height="2"/><rect x="160" y="170" width="1" height="1"/><rect x="161" y="169" width="1" height="1"/><rect x="165" y="166" width="1" height="10"/><rect x="174" y="171" width="10" height="1"/><path d="M180.5 168.5l3.5 3l-3.5 3" stroke="#000" fill="none" shape-rendering="auto"/></g></svg>
<svg class="a" style="left:0;top:0" width="1024" height="768" font-family="Liberation Sans" fill="#000">
<g shape-rendering="crispEdges">
<rect x="746" y="450" width="1" height="15"/><rect x="746" y="450" width="3" height="1"/><rect x="746" y="464" width="3" height="1"/>
<rect x="761" y="450" width="1" height="15"/><rect x="759" y="450" width="3" height="1"/><rect x="759" y="464" width="3" height="1"/>
<rect x="749" y="452" width="2" height="2"/>
<rect x="753" y="452" width="2" height="2"/>
<rect x="757" y="452" width="2" height="2"/>
<rect x="749" y="455" width="2" height="2"/>
<rect x="753" y="455" width="2" height="2"/>
<rect x="757" y="455" width="2" height="2"/>
<rect x="749" y="458" width="2" height="2"/>
<rect x="753" y="458" width="2" height="2"/>
<rect x="757" y="458" width="2" height="2"/>
<rect x="749" y="461" width="2" height="2"/>
<rect x="753" y="461" width="2" height="2"/>
<rect x="757" y="461" width="2" height="2"/>
<rect x="817" y="452" width="1" height="12"/><rect x="827" y="452" width="1" height="12"/>
<rect x="771" y="478" width="1" height="7"/><rect x="777" y="478" width="1" height="7"/><rect x="772" y="479" width="1" height="1"/><rect x="773" y="480" width="1" height="1"/><rect x="774" y="481" width="1" height="2"/><rect x="775" y="480" width="1" height="1"/><rect x="776" y="479" width="1" height="1"/>
<rect x="795" y="478" width="1" height="7"/><rect x="801" y="478" width="1" height="7"/><rect x="796" y="479" width="1" height="1"/><rect x="797" y="480" width="1" height="1"/><rect x="798" y="481" width="1" height="2"/><rect x="799" y="480" width="1" height="1"/><rect x="800" y="479" width="1" height="1"/>
<rect x="802" y="472" width="5" height="1"/><rect x="804" y="472" width="1" height="6"/>
<rect x="752" y="503" width="2" height="2"/>
<rect x="815" y="494" width="16" height="16" fill="#000"/><rect x="816" y="495" width="14" height="14" fill="#fff"/>
</g>
<g fill="none" stroke="#000" stroke-width="1.1">
<path d="M771.5 453.5l6.5 6.5M778 453.5l-6.5 6.5"/>
<path d="M794 458l7 7M801 458l-7 7"/>
<path d="M819 454.5l6 6M825 454.5l-6 6"/>
<path d="M774 502.5l4.5 4.5M778.5 502.5l-4.5 4.5"/>
<path d="M781 470.5l-3 3l3 3M783 470.5l3 3l-3 3" stroke-width="1"/>
<path d="M746 473h14M757 470.5l3 2.5l-3 2.5" stroke-width="1.3"/>
<path d="M817 509l3-3M819 506q0-5 2-6q2 1 1 6M822 500v6M824 503h5M823 506q3-2 6 0M824 508h5" stroke-width="1.2"/><circle cx="827" cy="499" r="1.6" stroke-width="1"/><path d="M816 510v-4l4 4z" fill="#000" stroke="none"/>
</g>
<text x="780" y="465.5" font-size="8" font-weight="bold">n</text>
<text x="801.5" y="456.5" font-size="8" font-weight="bold">-1</text>
<text x="745.5" y="486" font-size="10" font-weight="bold" textLength="15.5" lengthAdjust="spacingAndGlyphs">f(M)</text>
<text x="814" y="484.5" font-size="8" font-weight="bold" textLength="16.5" lengthAdjust="spacingAndGlyphs">m..n</text>
<text x="745.5" y="507" font-size="8" font-weight="bold">x</text><text x="756" y="507" font-size="8" font-weight="bold">y</text>
<text x="768.5" y="507" font-size="8" font-weight="bold">x</text><text x="779" y="507" font-size="8" font-weight="bold">y</text>
<g shape-rendering="crispEdges"><rect x="746" y="499" width="4" height="1"/><rect x="756" y="499" width="4" height="1"/><rect x="769" y="499" width="4" height="1"/><rect x="779" y="499" width="4" height="1"/></g>
<text x="793.5" y="507.5" font-size="11" font-weight="bold">Σ</text><text x="801" y="507.5" font-size="9">v</text>
</svg>

<!-- scrollbars -->
<div class="a" style="left:1005px;top:164px;width:17px;height:537px;background:#F6F5EE"></div>
<div class="a" style="left:1px;top:701px;width:1021px;height:18px;background:#F6F5EE"></div>
<div class="a" style="left:1px;top:163px;width:1px;height:556px;background:#7A7868"></div>
<div class="a" style="left:1022px;top:163px;width:2px;height:556px;background:#ECE9D8"></div>
<svg class="a" style="left:0;top:160px" width="1024" height="560" shape-rendering="crispEdges">
 <g fill="#C4D3F6" stroke="#fff" stroke-width="1">
  <rect x="1006.5" y="5.5" width="14" height="14" rx="2"/>
  <rect x="1006.5" y="21.5" width="14" height="16" rx="2"/>
  <rect x="1006.5" y="525.5" width="14" height="14" rx="2"/>
  <rect x="2.5" y="542.5" width="15" height="14" rx="2"/>
  <rect x="19.5" y="542.5" width="16" height="14" rx="2"/>
  <rect x="988.5" y="542.5" width="15" height="14" rx="2"/>
 </g>
 <g fill="none" stroke="#4D6185" stroke-width="2" shape-rendering="auto">
  <path d="M1010 15l3.5-3.5l3.5 3.5"/>
  <path d="M1010 531l3.5 3.5l3.5-3.5"/>
  <path d="M12 546l-3.5 3.5l3.5 3.5"/>
  <path d="M994 546l3.5 3.5l-3.5 3.5"/>
 </g>
 <g fill="#EEF3FF"><rect x="1010" y="25" width="7" height="1"/><rect x="1010" y="28" width="7" height="1"/><rect x="1010" y="31" width="7" height="1"/>
 <rect x="23" y="546" width="1" height="7"/><rect x="26" y="546" width="1" height="7"/><rect x="29" y="546" width="1" height="7"/><rect x="32" y="546" width="1" height="7"/></g>
 <g fill="#8CA4D8"><rect x="1010" y="26" width="7" height="1"/><rect x="1010" y="29" width="7" height="1"/><rect x="1010" y="32" width="7" height="1"/>
 <rect x="24" y="546" width="1" height="7"/><rect x="27" y="546" width="1" height="7"/><rect x="30" y="546" width="1" height="7"/></g>
</svg>

<!-- status bar -->
<div class="a" style="left:0;top:719px;width:1024px;height:19px;background:#ECE9D8">
 <div class="a" style="left:2px;top:4px;font-size:11.5px;letter-spacing:-0.3px">Press F1 for help.</div>
 <div class="a" style="left:879px;top:3px;width:34px;height:15px;border:1px solid;border-color:#ACA899 #fff #fff #ACA899;font-size:11px;line-height:15px;padding-left:1px;letter-spacing:-0.2px">AUTO</div>
 <div class="a" style="left:915px;top:3px;width:26px;height:15px;border:1px solid;border-color:#ACA899 #fff #fff #ACA899"></div>
 <div class="a" style="left:943px;top:3px;width:28px;height:15px;border:1px solid;border-color:#ACA899 #fff #fff #ACA899;font-size:11px;line-height:15px;padding-left:1px;letter-spacing:-0.3px">NUM</div>
 <div class="a" style="left:972px;top:3px;width:52px;height:15px;border:1px solid;border-color:#ACA899 #fff #fff #ACA899;font-size:11px;line-height:15px;padding-left:2px;letter-spacing:-0.1px">Page 3</div>
</div>
<!-- taskbar -->
<div class="a" style="left:0;top:738px;width:1024px;height:30px;background:linear-gradient(#3168D5 0,#4A8FF0 2px,#2D6AE0 5px,#245EDB 14px,#2058D6 26px,#1A4CC0 30px)"></div>
<div class="a" style="left:967px;top:738px;width:57px;height:30px;background:linear-gradient(#1E8CEA 0,#17A0F0 3px,#109AEE 14px,#0E8DE6 26px,#0B78D0 30px);border-left:1px solid #0A5CB8"></div>
<div class="a" style="left:0;top:738px;width:96px;height:30px;border-radius:0 12px 12px 0;background:linear-gradient(#3A8A3A 0,#5AAA55 2px,#3F943D 8px,#388C36 18px,#2F7E2F 26px,#2A6E2A 30px)"></div>
<svg class="a" style="left:9px;top:743px" width="22" height="20" shape-rendering="auto">
 <path d="M2 2q4-2 8 0v7q-4-2-8 0z" fill="#E8501C"/>
 <path d="M11 1q4 2 8 0v8q-4 2-8 0z" fill="#6AC22A"/>
 <path d="M1 11q4-2 8 0v7q-4-2-8 0z" fill="#2A7FE8"/>
 <path d="M10 10q4 2 8 0v8q-4 2-8 0z" fill="#F0C020"/>
</svg>
<div class="a" style="left:35px;top:743px;color:#fff;font-size:16.5px;font-weight:bold;font-style:italic;letter-spacing:-0.3px;text-shadow:1px 1px 1px #1A4A1A">пуск</div>
<div class="a" style="left:106px;top:742px;width:159px;height:23px;border-radius:3px;background:linear-gradient(#4A8CF6,#3A7CF0 4px,#3878EE);border:1px solid #2A60D8"></div>
<div class="a" style="left:266px;top:742px;width:158px;height:23px;border-radius:3px;background:linear-gradient(#4A8CF6,#3A7CF0 4px,#3878EE);border:1px solid #2A60D8"></div>
<div class="a" style="left:425px;top:742px;width:160px;height:23px;border-radius:3px;background:#1F4CBC;border:1px solid #183C98"></div>
<div class="a" style="left:586px;top:742px;width:158px;height:23px;border-radius:3px;background:linear-gradient(#4A8CF6,#3A7CF0 4px,#3878EE);border:1px solid #2A60D8"></div>
<svg class="a" style="left:0;top:738px" width="1024" height="30" shape-rendering="auto">
 <rect x="116" y="6" width="13" height="15" fill="#fff" stroke="#4A5A8A"/><rect x="114" y="9" width="9" height="8" fill="#2A4AA0"/><text x="115" y="16" font-size="7" fill="#fff" font-weight="bold" font-family="Liberation Sans">W</text>
 <rect x="278" y="6" width="12" height="15" fill="#fff" stroke="#6A7A9A"/><circle cx="281" cy="15" r="5" fill="none" stroke="#2A70E0" stroke-width="2.2"/>
 <circle cx="444" cy="14" r="6" fill="none" stroke="#D06A2A" stroke-width="3"/><path d="M440 14a4 4 0 0 1 8 0" stroke="#50A040" stroke-width="2" fill="none"/><text x="445" y="21" font-size="8" font-weight="bold" fill="#333" font-family="Liberation Sans">M</text>
 <path d="M595 8h5l2 2h8v10h-15z" fill="#F0D060" stroke="#A08020"/>
 <defs><radialGradient id="tg" cx="0.4" cy="0.35" r="0.7"><stop offset="0" stop-color="#9CD0FF"/><stop offset="0.6" stop-color="#3A8CF0"/><stop offset="1" stop-color="#1A5CC8"/></radialGradient></defs><rect x="926" y="4" width="28" height="22" fill="#2B62D6"/><circle cx="967" cy="15" r="9" fill="url(#tg)" stroke="#E8F0FF" stroke-width="1"/><path d="M969 10l-4 5l4 5" stroke="#fff" stroke-width="2.5" fill="none"/>
</svg>
<div class="a" style="left:135px;top:747px;color:#fff;font-size:11.5px;letter-spacing:-0.1px">Статья - Microsoft W...</div>
<div class="a" style="left:293px;top:747px;color:#fff;font-size:11.5px;letter-spacing:0.15px">Фестиваль педагог...</div>
<div class="a" style="left:455px;top:747px;color:#fff;font-size:11.5px;letter-spacing:-0.1px">Mathcad Professional...</div>
<div class="a" style="left:614px;top:747px;color:#fff;font-size:11.5px;letter-spacing:-0.1px">для первого</div>
<div class="a" style="left:932px;top:747px;color:#fff;font-size:11.5px;letter-spacing:-0.1px">EN</div>
<div class="a" style="left:983px;top:747px;color:#fff;font-size:11.5px;letter-spacing:-0.1px">10:19</div>
</body></html>
